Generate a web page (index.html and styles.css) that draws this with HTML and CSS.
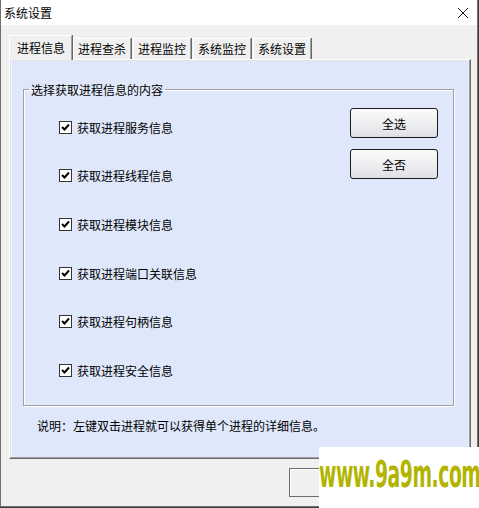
FILE: index.html
```html
<!DOCTYPE html>
<html>
<head>
<meta charset="utf-8">
<title>系统设置</title>
<link rel="stylesheet" href="styles.css">
</head>
<body>
<div class="window">
  <div class="titlebar">
    <span class="title">系统设置</span>
    <svg class="close" width="12" height="12" viewBox="0 0 12 12"><path d="M1 1 L11 11 M11 1 L1 11" stroke="#1a1a1a" stroke-width="1"/></svg>
  </div>

  <div class="tabs">
    <div class="tab active">进程信息</div>
    <div class="tab">进程查杀</div>
    <div class="tab">进程监控</div>
    <div class="tab">系统监控</div>
    <div class="tab">系统设置</div>
  </div>

  <div class="panel">
    <fieldset class="group">
      <legend>选择获取进程信息的内容</legend>
      <div class="group-body">
        <ul class="checklist">
          <li><span class="check"><svg width="9" height="9" viewBox="0 0 9 9"><path d="M1 4 L3.5 6.5 L8 1.5" fill="none" stroke="#000" stroke-width="2"/></svg></span>获取进程服务信息</li>
          <li><span class="check"><svg width="9" height="9" viewBox="0 0 9 9"><path d="M1 4 L3.5 6.5 L8 1.5" fill="none" stroke="#000" stroke-width="2"/></svg></span>获取进程线程信息</li>
          <li><span class="check"><svg width="9" height="9" viewBox="0 0 9 9"><path d="M1 4 L3.5 6.5 L8 1.5" fill="none" stroke="#000" stroke-width="2"/></svg></span>获取进程模块信息</li>
          <li><span class="check"><svg width="9" height="9" viewBox="0 0 9 9"><path d="M1 4 L3.5 6.5 L8 1.5" fill="none" stroke="#000" stroke-width="2"/></svg></span>获取进程端口关联信息</li>
          <li><span class="check"><svg width="9" height="9" viewBox="0 0 9 9"><path d="M1 4 L3.5 6.5 L8 1.5" fill="none" stroke="#000" stroke-width="2"/></svg></span>获取进程句柄信息</li>
          <li><span class="check"><svg width="9" height="9" viewBox="0 0 9 9"><path d="M1 4 L3.5 6.5 L8 1.5" fill="none" stroke="#000" stroke-width="2"/></svg></span>获取进程安全信息</li>
        </ul>
        <div class="buttons">
          <button class="btn">全选</button>
          <button class="btn">全否</button>
        </div>
      </div>
    </fieldset>
    <p class="note">说明：左键双击进程就可以获得单个进程的详细信息。</p>
  </div>

  <div class="footer">
    <button class="btn ok"></button>
  </div>
</div>

<div class="watermark"><span>www.9a9m.com</span></div>
</body>
</html>
```

FILE: styles.css
```css
body {
  margin: 0;
  background: #3c3f3c;
  font-family: "Noto Sans CJK SC", "Microsoft YaHei", sans-serif;
  font-size: 12px;
  color: #000;
  position: relative;
  width: 479px;
  height: 508px;
  overflow: hidden;
}

.window {
  width: 478px;
  height: 507px;
  box-sizing: border-box;
  background: #f0f0f0;
  border: 1px solid #6f6f6f;
  border-top: none;
  display: flex;
  flex-direction: column;
}

.titlebar {
  height: 25px;
  background: #fff;
  display: flex;
  align-items: center;
  padding: 0 8px 0 3px;
}
.titlebar .title { line-height: 25px; }
.titlebar .close { margin-left: auto; }

/* tab strip */
.tabs {
  display: flex;
  align-items: flex-end;
  margin: 10px 0 0 8px;
  height: 24px;
  position: relative;
  z-index: 1;
}
.tab {
  height: 21px;
  line-height: 20px;
  padding: 0 4px;
  box-sizing: border-box;
  background: #f0f0f0;
  border-top: 1px solid #fff;
  border-left: 1px solid #fff;
  border-right: 1px solid #a0a0a0;
  box-shadow: 1px 0 0 #696969;
  margin-right: 2px;
}
.tab.active {
  height: 25px;
  line-height: 24px;
  padding: 0 6px 0 7px;
  margin-bottom: -1px;
  margin-right: 1px;
}

.panel {
  height: 400px;
  margin: 0 6px 0 8px;
  box-sizing: border-box;
  background: #dfe8fb;
  border: 1px solid;
  border-color: #fff #696969 #696969 #fff;
  box-shadow: inset -1px -1px 0 #a0a0a0, inset 1px 1px 0 #e3e3e3, inset 2px 0 0 #eef2f8;
  padding: 21px 16px 0 13px;
}

.group {
  margin: 0;
  padding: 5px 0 10px 0;
  border: 1px solid #a0a0a0;
  box-shadow: 1px 1px 0 #fff, inset 1px 1px 0 #fff;
}
.group legend {
  margin-left: 5px;
  padding: 0 2px;
  line-height: 17px;
}
.group-body {
  display: flex;
  align-items: flex-start;
  padding-left: 35px;
}

.checklist {
  list-style: none;
  margin: 0;
  padding: 0;
}
.checklist li {
  height: 48.6px;
  display: flex;
  align-items: center;
}
.check {
  width: 13px;
  height: 13px;
  box-sizing: border-box;
  border: 1px solid #333;
  background: #fff;
  margin-right: 5px;
  display: flex;
  align-items: center;
  justify-content: center;
}

.buttons {
  margin: 5px 15px 0 auto;
  display: flex;
  flex-direction: column;
  gap: 11px;
}
.btn {
  width: 88px;
  height: 30px;
  font: inherit;
  border: 1px solid #1b1b1b;
  border-radius: 3px;
  background: linear-gradient(#fbfbfb, #ececf0 60%, #dedee4);
  padding: 0;
}

.note {
  margin: 11px 0 0 14px;
  line-height: 17px;
}

.footer {
  padding: 9px 0 0 288px;
}
.btn.ok {
  height: 29px;
  border: 1px solid #6b6b6b;
  border-radius: 0;
  background: #f0f0f0;
  box-shadow: inset 1px 1px 0 #fff;
}

/* site watermark laid over the corner */
.watermark {
  position: absolute;
  left: 319px;
  top: 447px;
  right: 0;
  bottom: 0;
  background: #fff;
  overflow: hidden;
}
.watermark span {
  display: block;
  margin-top: 6px;
  color: #b2b400;
  font-family: "DejaVu Sans Condensed", "DejaVu Sans", sans-serif;
  font-weight: bold;
  font-size: 22px;
  letter-spacing: -0.5px;
  line-height: 26px;
  white-space: nowrap;
  transform: scale(0.95, 1.7);
  transform-origin: left top;
}
```
